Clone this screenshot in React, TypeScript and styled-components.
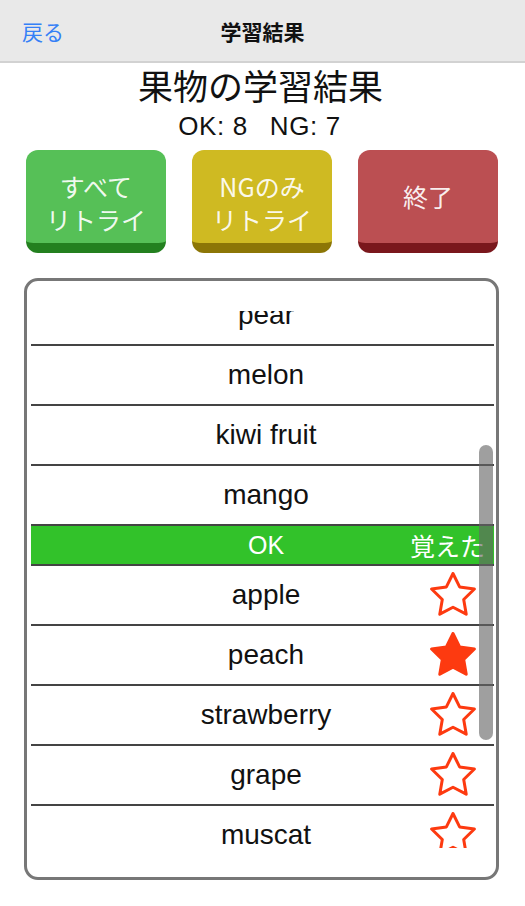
import { useLayoutEffect, useRef } from "react"
import styled, { createGlobalStyle } from "styled-components"

const GlobalStyle = createGlobalStyle`
  html, body {
    margin: 0;
    padding: 0;
    background: #ffffff;
  }
  body {
    font-family: "Liberation Sans", "Noto Sans CJK JP", sans-serif;
    color: #111111;
  }
`

const Page = styled.div`
  width: 525px;
  height: 906px;
  display: flex;
  flex-direction: column;
  overflow: hidden;
`

const NavBar = styled.div`
  height: 61px;
  flex-shrink: 0;
  display: grid;
  grid-template-columns: 1fr auto 1fr;
  align-items: center;
  padding: 0 22px;
  background: #e9e9e9;
  border-bottom: 2px solid #d2d2d2;
`

const BackLink = styled.a`
  justify-self: start;
  font-family: "Noto Sans CJK JP", sans-serif;
  font-size: 21px;
  color: #3580f6;
  text-decoration: none;
`

const NavTitle = styled.div`
  font-family: "Noto Sans CJK JP", sans-serif;
  font-size: 21px;
  font-weight: 700;
  color: #111111;
`

const Heading = styled.h1`
  margin: 0;
  padding-right: 4px;
  font-family: "Noto Sans CJK JP", sans-serif;
  font-size: 35px;
  font-weight: 400;
  line-height: 44px;
  text-align: center;
`

const Stats = styled.div`
  display: flex;
  justify-content: center;
  gap: 22px;
  margin-top: 4px;
  padding-right: 6px;
  font-size: 26px;
  line-height: 30px;
  letter-spacing: 0.6px;
`

const ButtonRow = styled.div`
  display: grid;
  grid-template-columns: repeat(3, 1fr);
  gap: 26px;
  padding: 0 27px 0 26px;
  margin-top: 9px;
`

const ActionButton = styled.button<{ $face: string; $edge: string; $drop: number }>`
  height: 103px;
  padding: ${(p) => p.$drop}px 0 0;
  border: none;
  border-bottom: 10px solid ${(p) => p.$edge};
  border-radius: 12px;
  background: ${(p) => p.$face};
  color: rgba(255, 255, 255, 0.92);
  font-family: "Noto Sans CJK JP", sans-serif;
  font-size: 25px;
  line-height: 33px;
  display: flex;
  align-items: center;
  justify-content: center;
  text-align: center;
`

const ListBox = styled.div`
  margin: 25px 26px 0 24px;
  height: 602px;
  box-sizing: border-box;
  border: 3px solid #777777;
  border-radius: 14px;
  padding: 30px 2px 29px 4px;
`

const Viewport = styled.div`
  position: relative;
  height: 100%;
`

const Scroller = styled.div`
  height: 100%;
  overflow-y: scroll;
  scrollbar-width: none;
  &::-webkit-scrollbar {
    display: none;
  }
`

const ScrollThumb = styled.div`
  position: absolute;
  right: 1px;
  top: 134px;
  width: 14px;
  height: 295px;
  border-radius: 7px;
  background: rgba(100, 100, 100, 0.62);
`

const SectionHeader = styled.div<{ $bg: string }>`
  height: 38px;
  border-bottom: 2px solid #444444;
  background: ${(p) => p.$bg};
  color: #ffffff;
  display: grid;
  grid-template-columns: 1fr auto 1fr;
  align-items: center;
  padding: 0 9px 0 16px;
  font-size: 25px;
`

const HeaderSide = styled.span`
  justify-self: end;
  font-family: "Noto Sans CJK JP", sans-serif;
  font-size: 25px;
`

const WordRow = styled.div`
  height: 58px;
  border-bottom: 2px solid #444444;
  display: grid;
  grid-template-columns: 1fr auto 1fr;
  align-items: center;
  padding: 0 16px 0 23px;
`

const Word = styled.span`
  font-size: 28px;
  color: #111111;
  white-space: nowrap;
`

const StarSlot = styled.span`
  justify-self: end;
  display: flex;
`

const STAR =
  "M25 1.5 L31.61 14.9 L46.4 17.05 L35.7 27.48 L38.23 42.2 L25 35.25 L11.77 42.2 L14.3 27.48 L3.6 17.05 L18.39 14.9 Z"

const Star = ({ filled }: { filled: boolean }) => (
  <svg width="50" height="46" viewBox="0 0 50 46">
    <path
      d={STAR}
      fill={filled ? "#fd3a10" : "none"}
      stroke="#fd3a10"
      strokeWidth="3"
      strokeLinejoin="round"
    />
  </svg>
)

const ngWords = ["banana", "orange", "lemon", "pear", "melon", "kiwi fruit", "mango"]
const okWords = [
  { word: "apple", star: false },
  { word: "peach", star: true },
  { word: "strawberry", star: false },
  { word: "grape", star: false },
  { word: "muscat", star: false },
  { word: "cherry", star: false },
  { word: "watermelon", star: false },
  { word: "pineapple", star: false },
]

const App = () => {
  const scrollRef = useRef<HTMLDivElement>(null)

  useLayoutEffect(() => {
    if (scrollRef.current) scrollRef.current.scrollTop = 245
  }, [])

  return (
    <Page>
      <GlobalStyle />
      <NavBar>
        <BackLink>戻る</BackLink>
        <NavTitle>学習結果</NavTitle>
        <span />
      </NavBar>

      <Heading>果物の学習結果</Heading>
      <Stats>
        <span>OK: {okWords.length}</span>
        <span>NG: {ngWords.length}</span>
      </Stats>

      <ButtonRow>
        <ActionButton $face="#56c057" $edge="#23801f" $drop={12}>
          すべて
          <br />
          リトライ
        </ActionButton>
        <ActionButton $face="#cfba22" $edge="#8c7606" $drop={12}>
          NGのみ
          <br />
          リトライ
        </ActionButton>
        <ActionButton $face="#bb4f52" $edge="#7a171c" $drop={0}>
          終了
        </ActionButton>
      </ButtonRow>

      <ListBox>
        <Viewport>
          <Scroller ref={scrollRef}>
            <SectionHeader $bg="#d9403a">
              <span />
              <span>NG</span>
              <span />
            </SectionHeader>
            {ngWords.map((w) => (
              <WordRow key={w}>
                <span />
                <Word>{w}</Word>
                <span />
              </WordRow>
            ))}
            <SectionHeader $bg="#32c22a">
              <span />
              <span>OK</span>
              <HeaderSide>覚えた</HeaderSide>
            </SectionHeader>
            {okWords.map((w) => (
              <WordRow key={w.word}>
                <span />
                <Word>{w.word}</Word>
                <StarSlot>
                  <Star filled={w.star} />
                </StarSlot>
              </WordRow>
            ))}
          </Scroller>
          <ScrollThumb />
        </Viewport>
      </ListBox>
    </Page>
  )
}

export default App
